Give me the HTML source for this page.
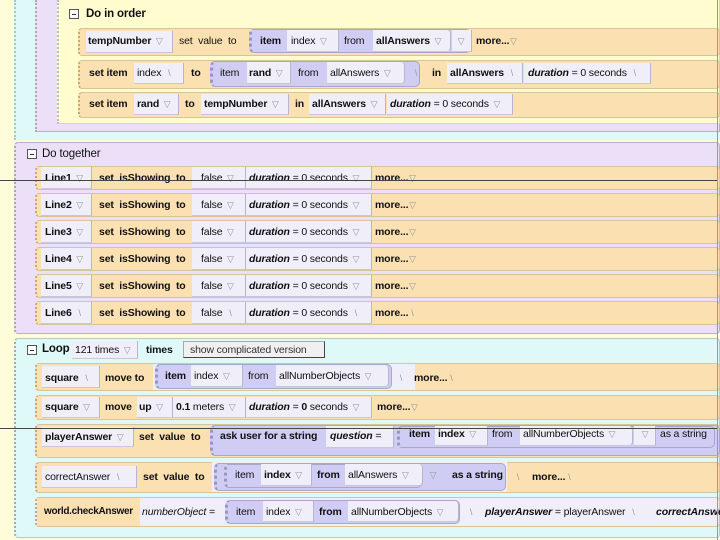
<!DOCTYPE html>
<html><head><meta charset="utf-8"><style>
*{margin:0;padding:0;box-sizing:border-box}
body{width:720px;height:540px;overflow:hidden;position:relative;background:#fefcd9;font-family:"Liberation Sans",sans-serif;font-size:10.5px;letter-spacing:-0.15px;color:#111}
.a{position:absolute}
.t{position:absolute;white-space:nowrap;font-weight:bold}
.n{font-weight:normal}
.i{font-style:italic}
.o{position:absolute;background:#fbe0b2;border:1px solid #d9c39a;border-radius:4px;border-left:2px dotted #c9a870}
.w{position:absolute;background:#efeef9;border-right:1px solid #b8b6cc;border-bottom:1px solid #c8c6da}
.p{position:absolute;background:#cfcdf3;border:1px solid #a9a7c8;border-radius:5px;border-left:3px dotted #9996bb}
.m{display:inline-block;width:16px;color:#999;font-weight:normal;font-size:9px;text-align:center}
.sq{position:absolute;width:10px;height:10px;border:1px solid #555;background:#fff}
.sq:after{content:"";position:absolute;left:2px;top:4px;width:4px;height:1px;background:#333}
</style></head><body>
<div class="a" style="left:14px;top:0;width:706px;height:140px;background:#def9f8;border-left:2px dotted #9cc"></div>
<div class="a" style="left:35px;top:0;width:685px;height:132px;background:#ebe0f8;border:1px solid #b9b0c8;border-left:2px dotted #aaa;border-top:none"></div>
<div class="a" style="left:57px;top:0;width:663px;height:124px;background:#fffdd0;border:1px solid #ddd6a8;border-left:2px dotted #bbb;border-top:none"></div>
<div class="sq" style="left:69px;top:9px"></div>
<div class="t" style="left:86px;top:8px;font-size:11.5px">Do in order</div>

<!-- row1 -->
<div class="o" style="left:78px;top:28px;width:642px;height:28px"></div>
<div class="w" style="left:86px;top:31px;width:87px;height:22px"></div>
<div class="t" style="left:88px;top:35px">tempNumber<span class="m">▽</span></div>
<div class="t n" style="left:179px;top:35px">set&nbsp; value&nbsp; to</div>
<div class="p" style="left:249px;top:29px;width:222px;height:24px"></div>
<div class="t" style="left:260px;top:35px">item</div>
<div class="w" style="left:287px;top:30px;width:52px;height:22px"></div>
<div class="t n" style="left:291px;top:35px">index<span class="m">▽</span></div>
<div class="t n" style="left:344px;top:35px">from</div>
<div class="w" style="left:373px;top:30px;width:78px;height:22px;border-radius:0 4px 4px 0"></div>
<div class="t" style="left:376px;top:35px">allAnswers<span class="m">▽</span></div>
<div class="w" style="left:452px;top:30px;width:20px;height:22px"></div>
<div class="t" style="left:453px;top:35px"><span class="m">▽</span></div>
<div class="t" style="left:476px;top:35px">more...<span class="m" style="width:8px">▽</span></div>

<!-- row2 -->
<div class="o" style="left:78px;top:60px;width:642px;height:29px"></div>
<div class="t" style="left:89px;top:67px">set item</div>
<div class="w" style="left:134px;top:63px;width:50px;height:21px"></div>
<div class="t n" style="left:137px;top:67px">index<span class="m">\</span></div>
<div class="t" style="left:191px;top:67px">to</div>
<div class="p" style="left:210px;top:61px;width:210px;height:26px"></div>
<div class="t n" style="left:220px;top:67px">item</div>
<div class="w" style="left:247px;top:62px;width:44px;height:22px"></div>
<div class="t" style="left:249px;top:67px">rand<span class="m">▽</span></div>
<div class="t n" style="left:298px;top:67px">from</div>
<div class="w" style="left:327px;top:62px;width:78px;height:22px;border-radius:0 4px 4px 0"></div>
<div class="t n" style="left:330px;top:67px">allAnswers<span class="m">▽</span></div>
<div class="t" style="left:408px;top:67px"><span class="m">\</span></div>
<div class="t" style="left:432px;top:67px">in</div>
<div class="w" style="left:447px;top:63px;width:76px;height:21px"></div>
<div class="t" style="left:450px;top:67px">allAnswers<span class="m">\</span></div>
<div class="w" style="left:524px;top:63px;width:127px;height:21px"></div>
<div class="t n" style="left:528px;top:67px"><b class="i">duration</b> = 0 seconds<span class="m">\</span></div>

<!-- row3 -->
<div class="o" style="left:78px;top:92px;width:642px;height:26px"></div>
<div class="t" style="left:89px;top:98px">set item</div>
<div class="w" style="left:134px;top:94px;width:45px;height:21px"></div>
<div class="t" style="left:137px;top:98px">rand<span class="m">▽</span></div>
<div class="t" style="left:185px;top:98px">to</div>
<div class="w" style="left:201px;top:94px;width:88px;height:21px"></div>
<div class="t" style="left:204px;top:98px">tempNumber<span class="m">▽</span></div>
<div class="t" style="left:295px;top:98px">in</div>
<div class="w" style="left:309px;top:94px;width:77px;height:21px"></div>
<div class="t" style="left:312px;top:98px">allAnswers<span class="m">▽</span></div>
<div class="w" style="left:387px;top:94px;width:126px;height:21px"></div>
<div class="t n" style="left:390px;top:98px"><b class="i">duration</b> = 0 seconds<span class="m">▽</span></div>

<!-- Do together -->
<div class="a" style="left:14px;top:142px;width:706px;height:192px;background:#ebe0f8;border:1px solid #b9b0c8;border-left:2px dotted #aaa;border-radius:4px"></div>
<div class="sq" style="left:27px;top:149px"></div>
<div class="t" style="left:42px;top:148px;font-size:11.5px;font-weight:normal">Do together</div>
<div id="dt"></div>

<!-- Loop -->
<div class="a" style="left:14px;top:338px;width:706px;height:200px;background:#def9f8;border:1px solid #b9c8c8;border-left:2px dotted #aaa;border-radius:4px"></div>
<div class="sq" style="left:27px;top:345px"></div>
<div class="t" style="left:42px;top:343px;font-size:11.5px">Loop</div>
<div class="w" style="left:72px;top:341px;width:66px;height:18px"></div>
<div class="t n" style="left:75px;top:344px">121 times<span class="m">▽</span></div>
<div class="t" style="left:146px;top:344px">times</div>
<div class="a" style="left:183px;top:341px;width:142px;height:17px;background:#f0f0f0;border:1px solid #444;border-top-color:#aaa;border-left-color:#aaa"></div>
<div class="t n" style="left:190px;top:344px;color:#333">show complicated version</div>

<!-- square move to -->
<div class="o" style="left:35px;top:363px;width:685px;height:28px"></div>
<div class="w" style="left:42px;top:366px;width:58px;height:22px"></div>
<div class="t" style="left:45px;top:372px">square<span class="m">\</span></div>
<div class="t" style="left:105px;top:372px">move to</div>
<div class="a" style="left:153px;top:364px;width:262px;height:26px;background:#efeef9"></div>
<div class="p" style="left:155px;top:364px;width:237px;height:25px"></div>
<div class="t" style="left:165px;top:370px">item</div>
<div class="w" style="left:191px;top:365px;width:52px;height:22px"></div>
<div class="t n" style="left:194px;top:370px">index<span class="m">▽</span></div>
<div class="t n" style="left:248px;top:370px">from</div>
<div class="w" style="left:276px;top:365px;width:113px;height:22px;border-radius:0 4px 4px 0"></div>
<div class="t n" style="left:279px;top:370px">allNumberObjects<span class="m">▽</span></div>
<div class="t" style="left:393px;top:372px"><span class="m">\</span></div>
<div class="t" style="left:414px;top:372px">more...<span class="m" style="width:8px">\</span></div>

<!-- square move up -->
<div class="o" style="left:35px;top:395px;width:685px;height:25px"></div>
<div class="w" style="left:42px;top:397px;width:58px;height:21px"></div>
<div class="t" style="left:45px;top:401px">square<span class="m">▽</span></div>
<div class="t" style="left:105px;top:401px">move</div>
<div class="w" style="left:137px;top:397px;width:36px;height:21px"></div>
<div class="t" style="left:139px;top:401px">up<span class="m">▽</span></div>
<div class="w" style="left:173px;top:397px;width:73px;height:21px"></div>
<div class="t n" style="left:176px;top:401px"><b>0.1</b> meters<span class="m">▽</span></div>
<div class="w" style="left:246px;top:397px;width:126px;height:21px"></div>
<div class="t n" style="left:249px;top:401px"><b class="i">duration</b> = <b>0</b> seconds<span class="m">▽</span></div>
<div class="t" style="left:377px;top:401px">more...<span class="m" style="width:8px">▽</span></div>

<!-- playerAnswer -->
<div class="o" style="left:35px;top:424px;width:685px;height:34px"></div>
<div class="w" style="left:42px;top:427px;width:92px;height:20px"></div>
<div class="t" style="left:45px;top:431px">playerAnswer<span class="m">▽</span></div>
<div class="t" style="left:139px;top:431px">set&nbsp; value&nbsp; to</div>
<div class="p" style="left:210px;top:425px;width:510px;height:31px"></div>
<div class="t" style="left:220px;top:430px">ask user for a string</div>
<div class="w" style="left:326px;top:426px;width:68px;height:22px"></div>
<div class="t n" style="left:330px;top:430px"><b class="i">question</b> =</div>
<div class="p" style="left:397px;top:426px;width:318px;height:22px"></div>
<div class="t" style="left:409px;top:428px">item</div>
<div class="w" style="left:435px;top:426px;width:53px;height:20px"></div>
<div class="t" style="left:438px;top:428px">index<span class="m">▽</span></div>
<div class="t n" style="left:492px;top:428px">from</div>
<div class="w" style="left:520px;top:426px;width:113px;height:20px;border-radius:0 4px 4px 0"></div>
<div class="t n" style="left:523px;top:428px">allNumberObjects<span class="m">▽</span></div>
<div class="w" style="left:634px;top:426px;width:22px;height:20px"></div>
<div class="t" style="left:637px;top:428px"><span class="m">▽</span></div>
<div class="t n" style="left:660px;top:428px">as a string</div>

<!-- correctAnswer -->
<div class="o" style="left:35px;top:462px;width:685px;height:31px"></div>
<div class="w" style="left:42px;top:466px;width:95px;height:22px"></div>
<div class="t n" style="left:45px;top:471px">correctAnswer<span class="m">\</span></div>
<div class="t" style="left:143px;top:471px">set&nbsp; value&nbsp; to</div>
<div class="a" style="left:212px;top:462px;width:295px;height:30px;background:#efeef9"></div>
<div class="p" style="left:214px;top:463px;width:292px;height:28px"></div>
<div class="p" style="left:224px;top:464px;width:198px;height:24px"></div>
<div class="t n" style="left:235px;top:469px">item</div>
<div class="w" style="left:261px;top:464px;width:51px;height:22px"></div>
<div class="t" style="left:264px;top:469px">index<span class="m">▽</span></div>
<div class="t" style="left:317px;top:469px">from</div>
<div class="w" style="left:345px;top:464px;width:78px;height:22px;border-radius:0 4px 4px 0"></div>
<div class="t n" style="left:348px;top:469px">allAnswers<span class="m">▽</span></div>
<div class="t" style="left:425px;top:469px"><span class="m">▽</span></div>
<div class="t" style="left:452px;top:469px">as a string</div>
<div class="t" style="left:510px;top:471px"><span class="m">\</span></div>
<div class="t" style="left:532px;top:471px">more...<span class="m" style="width:8px">\</span></div>

<!-- checkAnswer -->
<div class="o" style="left:35px;top:497px;width:685px;height:30px;background:#efeef9"></div>
<div class="a" style="left:37px;top:498px;width:103px;height:28px;background:#fbe0b2"></div>
<div class="t" style="left:44px;top:506px;font-size:10px;letter-spacing:-0.3px">world.checkAnswer</div>
<div class="t n i" style="left:142px;top:506px">numberObject =</div>
<div class="p" style="left:225px;top:500px;width:235px;height:24px"></div>
<div class="t n" style="left:236px;top:506px">item</div>
<div class="w" style="left:263px;top:501px;width:51px;height:21px"></div>
<div class="t n" style="left:266px;top:506px">index<span class="m">▽</span></div>
<div class="t" style="left:319px;top:506px">from</div>
<div class="w" style="left:348px;top:501px;width:111px;height:21px;border-radius:0 4px 4px 0"></div>
<div class="t n" style="left:351px;top:506px">allNumberObjects<span class="m">▽</span></div>
<div class="t" style="left:463px;top:506px"><span class="m">\</span></div>
<div class="t n" style="left:485px;top:506px"><b class="i">playerAnswer</b> = playerAnswer<span class="m">\</span></div>
<div class="t i" style="left:656px;top:506px">correctAnswer</div>

<div class="a" style="left:0;top:180px;width:718px;height:1px;background:#444"></div>
<div class="a" style="left:0;top:428px;width:718px;height:1px;background:#444"></div>
<div class="a" style="left:717px;top:0;width:1px;height:540px;background:#999"></div>

<script>
var h='';
for(var k=0;k<6;k++){var y=166+k*27;var g=(k==5?'\\':'▽');
h+='<div class="o" style="left:35px;top:'+y+'px;width:685px;height:24px"></div>'+
'<div class="w" style="left:41px;top:'+(y+1)+'px;width:51px;height:22px"></div>'+
'<div class="t" style="left:45px;top:'+(y+6)+'px">Line'+(k+1)+'<span class="m">'+g+'</span></div>'+
'<div class="t" style="left:99px;top:'+(y+6)+'px">set&nbsp; isShowing&nbsp; to</div>'+
'<div class="w" style="left:192px;top:'+(y+1)+'px;width:54px;height:22px"></div>'+
'<div class="t n" style="left:201px;top:'+(y+6)+'px">false<span class="m">'+g+'</span></div>'+
'<div class="w" style="left:246px;top:'+(y+1)+'px;width:126px;height:22px"></div>'+
'<div class="t n" style="left:249px;top:'+(y+6)+'px"><b class="i">duration</b> = 0 seconds<span class="m">'+g+'</span></div>'+
'<div class="t" style="left:375px;top:'+(y+6)+'px">more...<span class="m" style="width:8px">'+g+'</span></div>';}
document.getElementById('dt').outerHTML=h;
</script>
</body></html>
